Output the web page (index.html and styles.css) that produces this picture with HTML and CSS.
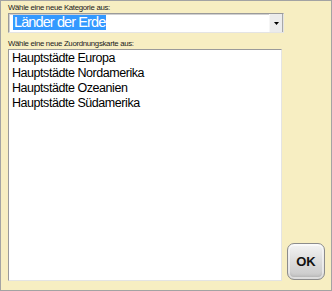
FILE: index.html
```html
<!DOCTYPE html>
<html lang="de">
<head>
    <meta charset="UTF-8">
    <title>Zuordnungskarte wählen</title>
    <link rel="stylesheet" href="styles.css">
</head>
<body>
    <div class="window">
        <div class="caption">Wähle eine neue Kategorie aus:</div>
        <div class="combo">
            <span class="combo-value">Länder der Erde</span>
            <span class="combo-btn">
                <svg width="5" height="3" viewBox="0 0 5 3"><path d="M0 0h5L2.5 3z" fill="#000"/></svg>
            </span>
        </div>
        <div class="caption second">Wähle eine neue Zuordnungskarte aus:</div>
        <div class="bottom">
            <ul class="list">
                <li>Hauptstädte Europa</li>
                <li>Hauptstädte Nordamerika</li>
                <li>Hauptstädte Ozeanien</li>
                <li>Hauptstädte Südamerika</li>
            </ul>
            <button class="ok">OK</button>
        </div>
    </div>
</body>
</html>
```

FILE: styles.css
```css
body {
    margin: 0;
    padding: 0;
    background-color: #f7eec2;
    font-family: "Liberation Sans", Arial, sans-serif;
}

.window {
    box-sizing: border-box;
    width: 332px;
    height: 291px;
    border: 1px solid #a3a3a3;
    padding: 2px 0 0 7px;
    background-color: #f7eec2;
}

.caption {
    font-size: 7.8px;
    line-height: 9px;
    letter-spacing: -0.3px;
    color: #1a1a1a;
}

.caption.second {
    margin-top: 6px;
}

.combo {
    box-sizing: border-box;
    display: flex;
    width: 276px;
    height: 20px;
    margin-top: 1px;
    background-color: #fff;
    border: 1px solid;
    border-color: #9a9a9a #e4e4e4 #e4e4e4 #9a9a9a;
    box-shadow: inset 1px 1px 0 #d0d0d0;
}

.combo-value {
    align-self: flex-start;
    margin: 1px 0 0 4px;
    padding: 0 1px;
    font-size: 14.5px;
    line-height: 15px;
    letter-spacing: -0.9px;
    color: #fff;
    background-color: #3399ff;
}

.combo-btn {
    display: flex;
    align-items: center;
    justify-content: center;
    width: 12px;
    margin-left: auto;
    background-color: #ececec;
    border-left: 1px solid #f6f6f6;
    border-right: 1px solid #a8a8a8;
}

.bottom {
    display: flex;
    align-items: flex-end;
    margin-top: 1px;
}

.list {
    box-sizing: border-box;
    width: 274px;
    height: 232px;
    margin: 0;
    padding: 1px 3px;
    list-style: none;
    background-color: #fff;
    border: 1px solid;
    border-color: #9a9a9a #e4e4e4 #e4e4e4 #9a9a9a;
    font-size: 12.5px;
    line-height: 15px;
    letter-spacing: -0.45px;
    color: #000;
}

.ok {
    box-sizing: border-box;
    width: 38px;
    height: 37px;
    margin: 0 0 1px 5px;
    padding: 0;
    border: 1px solid #8c8c8c;
    border-radius: 7px;
    background: linear-gradient(#f4f4f4, #dedede 45%, #c8c8c8);
    box-shadow: inset 0 0 0 2px rgba(255, 255, 255, 0.55), inset 0 -3px 3px rgba(0, 0, 0, 0.12);
    font-family: "Liberation Sans", Arial, sans-serif;
    font-weight: bold;
    font-size: 13px;
    color: #111;
    cursor: pointer;
}
```
